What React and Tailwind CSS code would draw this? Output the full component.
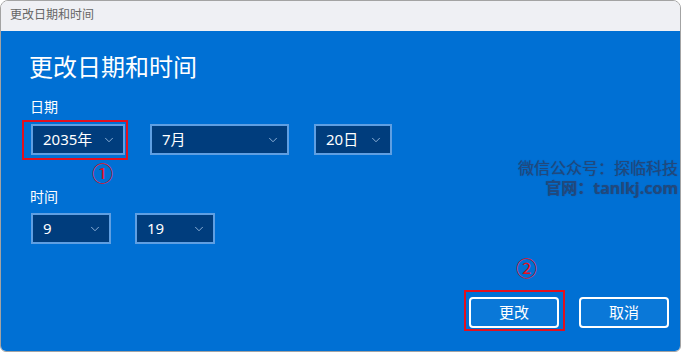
import { ChevronDown } from 'lucide-react'

const font = { fontFamily: '"Noto Sans", "Noto Sans CJK SC", sans-serif' }

function Dropdown({ value, className }) {
  return (
    <div className={`flex h-[31px] items-center justify-between border-2 border-[#5f9fe2] bg-[#003d7d] pl-[10px] pr-[7px] text-[15px] text-white ${className}`}>
      <span className="leading-none">{value}</span>
      <ChevronDown size={14} strokeWidth={1.4} className="text-[#a9c6e8]" />
    </div>
  )
}

export default function App() {
  return (
    <div className="h-[353px] w-[682px] bg-white" style={font}>
      <div className="flex h-[352px] w-[681px] flex-col overflow-hidden rounded-t-[8px] rounded-b-[6px] border border-[#a3a3a3]">
        <div className="flex h-[30px] shrink-0 items-center bg-[#eff0f4] pl-[9px] pb-[2px] text-[12px] text-[#666]">更改日期和时间</div>

        <div className="relative flex flex-1 flex-col bg-[#0070d4] pl-[30px] pr-[11px] pb-[23px] text-white">
          <h1 className="-ml-[2px] mt-[20px] text-[24px] leading-[32px]">更改日期和时间</h1>

          <p className="-ml-[1px] mt-[14px] text-[14px] leading-[20px]">日期</p>
          <div className="mt-[7px] flex gap-[25px]">
            <Dropdown value="2035年" className="w-[94px]" />
            <Dropdown value="7月" className="w-[139px]" />
            <Dropdown value="20日" className="w-[78px]" />
          </div>

          <p className="-ml-[1px] mt-[32px] text-[14px] leading-[20px]">时间</p>
          <div className="mt-[6px] flex gap-[24px]">
            <Dropdown value="9" className="w-[80px]" />
            <Dropdown value="19" className="w-[80px]" />
          </div>

          <div className="mt-auto flex justify-end gap-[20px]">
            <button className="h-[31px] w-[90px] rounded-[4px] border-2 border-white bg-[#0a78d8] text-[15px]">更改</button>
            <button className="h-[31px] w-[90px] rounded-[4px] border-2 border-white bg-[#0a78d8] text-[15px]">取消</button>
          </div>

          {/* annotations */}
          <div className="absolute left-[21px] top-[89px] h-[40px] w-[106px] border-2 border-[#e3101e]" />
          <div className="absolute left-[91px] top-[128px] text-[21px] leading-[28px] text-[#e3101e]">①</div>
          <div className="absolute left-[463px] top-[259px] h-[41px] w-[101px] border-2 border-[#e3101e]" />
          <div className="absolute left-[515px] top-[223px] text-[21px] leading-[28px] text-[#e3101e]">②</div>

          <div className="absolute right-[2px] top-[127px] text-right text-[16px] leading-[20px] text-[#21497d] [text-shadow:0_0_1px_#0d4a8e]">
            <p>微信公众号：探临科技</p>
            <p className="font-bold">官网：tanlkj.com</p>
          </div>
        </div>
      </div>
    </div>
  )
}
